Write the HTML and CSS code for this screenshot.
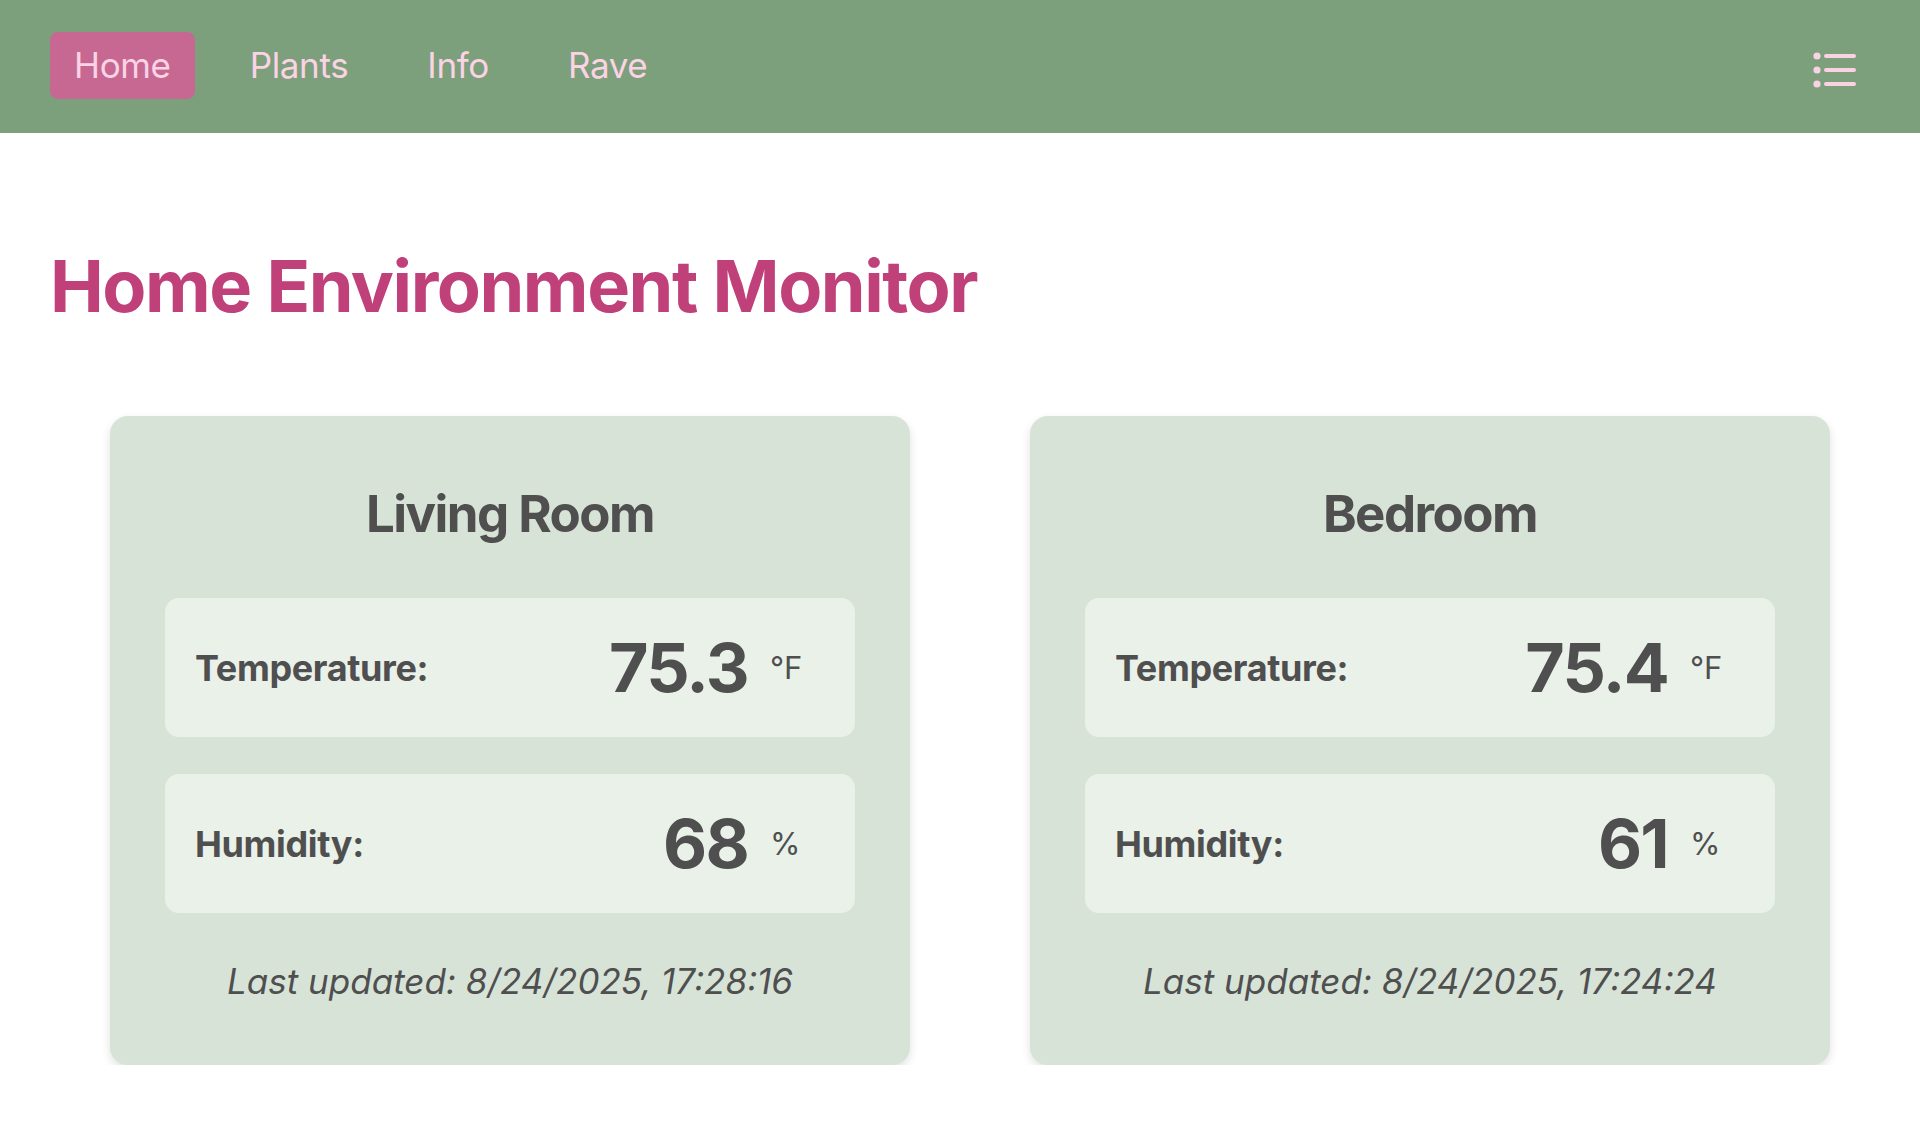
FILE: index.html
```html
<!DOCTYPE html>
<html lang="en">
<head>
<meta charset="utf-8">
<title>Home Environment Monitor</title>
<link rel="stylesheet" href="styles.css">
</head>
<body>
<nav class="topbar">
  <ul class="nav-links">
    <li><a class="nav-link active" href="#">Home</a></li>
    <li><a class="nav-link" href="#">Plants</a></li>
    <li><a class="nav-link" href="#">Info</a></li>
    <li><a class="nav-link" href="#">Rave</a></li>
  </ul>
  <button class="menu-btn" aria-label="Menu">
    <svg width="44" height="38" viewBox="0 0 44 38" fill="none">
      <circle cx="4" cy="5" r="3.6" fill="#f9d2e3"/>
      <circle cx="4" cy="19" r="3.6" fill="#f9d2e3"/>
      <circle cx="4" cy="33" r="3.6" fill="#f9d2e3"/>
      <line x1="13" y1="5" x2="41" y2="5" stroke="#f9d2e3" stroke-width="4" stroke-linecap="round"/>
      <line x1="13" y1="19" x2="41" y2="19" stroke="#f9d2e3" stroke-width="4" stroke-linecap="round"/>
      <line x1="13" y1="33" x2="41" y2="33" stroke="#f9d2e3" stroke-width="4" stroke-linecap="round"/>
    </svg>
  </button>
</nav>
<main class="page">
  <h1 class="page-title">Home Environment Monitor</h1>
  <section class="rooms">
    <article class="room-card">
      <h2 class="room-name">Living Room</h2>
      <div class="reading">
        <span class="reading-label">Temperature:</span>
        <span class="reading-value">75.3</span>
        <span class="reading-unit">°F</span>
      </div>
      <div class="reading">
        <span class="reading-label">Humidity:</span>
        <span class="reading-value">68</span>
        <span class="reading-unit">%</span>
      </div>
      <p class="updated">Last updated: 8/24/2025, 17:28:16</p>
    </article>
    <article class="room-card">
      <h2 class="room-name">Bedroom</h2>
      <div class="reading">
        <span class="reading-label">Temperature:</span>
        <span class="reading-value">75.4</span>
        <span class="reading-unit">°F</span>
      </div>
      <div class="reading">
        <span class="reading-label">Humidity:</span>
        <span class="reading-value">61</span>
        <span class="reading-unit">%</span>
      </div>
      <p class="updated">Last updated: 8/24/2025, 17:24:24</p>
    </article>
  </section>
</main>
</body>
</html>
```
FILE: styles.css
```css
* { box-sizing: border-box; }

html, body {
  margin: 0;
  padding: 0;
  background: #ffffff;
  font-family: Inter, "Noto Sans", "Liberation Sans", sans-serif;
  color: #505050;
}

.topbar {
  height: 133px;
  background: #7ba07b;
  display: flex;
  align-items: center;
  justify-content: space-between;
  padding: 0 63px 0 50px;
}

.nav-links {
  list-style: none;
  margin: 0;
  padding: 0;
  display: flex;
  gap: 31px;
  margin-top: -2px;
}

.nav-link {
  display: block;
  padding: 12px 24px;
  font-size: 35px;
  line-height: 43px;
  color: #fbd3e5;
  text-decoration: none;
  border-radius: 8px;
  letter-spacing: -0.01em;
}

.nav-link.active {
  background: #c66892;
}

.menu-btn {
  background: none;
  border: 0;
  padding: 0;
  margin-top: 6px;
  display: flex;
  cursor: pointer;
}

.page {
  padding: 0 50px;
}

.page-title {
  margin: 109px 0 0;
  font-size: 72px;
  line-height: 87px;
  font-weight: 700;
  color: #c0407a;
  letter-spacing: -0.02em;
}

.rooms {
  display: grid;
  grid-template-columns: 800px 800px;
  gap: 120px;
  padding: 0 60px;
  margin-top: 87px;
}

.room-card {
  background: #d7e3d7;
  border-radius: 18px;
  padding: 67px 55px 63px;
  box-shadow: 0 4px 10px rgba(0, 0, 0, 0.12);
}

.room-name {
  margin: 0 0 53px;
  text-align: center;
  font-size: 51px;
  line-height: 62px;
  font-weight: 700;
  letter-spacing: -0.03em;
  color: #4f4f4f;
}

.reading {
  display: flex;
  align-items: center;
  height: 139px;
  padding: 0 30px;
  background: #e9f1e9;
  border-radius: 14px;
  margin-bottom: 37px;
}

.reading:last-of-type {
  margin-bottom: 0;
}

.reading-label {
  flex: 1;
  font-size: 36px;
  font-weight: 700;
  letter-spacing: -0.01em;
  color: #4f4f4f;
}

.reading-value {
  font-size: 68px;
  line-height: 81px;
  font-weight: 700;
  letter-spacing: -0.025em;
  color: #4f4f4f;
}

.reading-unit {
  width: 55px;
  margin-left: 22px;
  font-size: 31px;
  color: #4f4f4f;
}

.updated {
  margin: 47px 0 0;
  text-align: center;
  font-size: 35px;
  line-height: 42px;
  font-style: italic;
  letter-spacing: 0;
  color: #4f4f4f;
}
```
